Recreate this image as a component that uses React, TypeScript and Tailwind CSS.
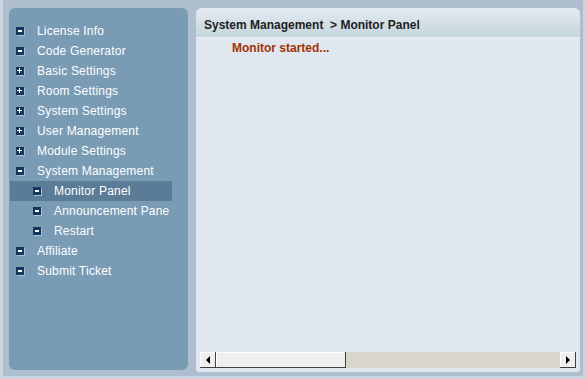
import React from "react";

type Item = { label: string; kind: "plus" | "minus"; sub?: boolean; active?: boolean };

const items: Item[] = [
  { label: "License Info", kind: "minus" },
  { label: "Code Generator", kind: "minus" },
  { label: "Basic Settings", kind: "plus" },
  { label: "Room Settings", kind: "plus" },
  { label: "System Settings", kind: "plus" },
  { label: "User Management", kind: "plus" },
  { label: "Module Settings", kind: "plus" },
  { label: "System Management", kind: "minus" },
  { label: "Monitor Panel", kind: "minus", sub: true, active: true },
  { label: "Announcement Pane", kind: "minus", sub: true },
  { label: "Restart", kind: "minus", sub: true },
  { label: "Affiliate", kind: "minus" },
  { label: "Submit Ticket", kind: "minus" },
];

function TreeIcon({ kind }: { kind: "plus" | "minus" }) {
  return (
    <span className="relative w-[8px] h-[8px] bg-[#16375d] shadow-[1px_1px_0_#a9c1d6] shrink-0">
      {kind === "minus" ? (
        <span className="absolute left-[2px] top-[3px] w-[4px] h-[2px] bg-white" />
      ) : (
        <>
          <span className="absolute left-[1px] top-[3px] w-[5px] h-[1px] bg-white" />
          <span className="absolute left-[3px] top-[1px] w-[1px] h-[5px] bg-white" />
        </>
      )}
    </span>
  );
}

export default function App() {
  return (
    <div
      className="w-[586px] h-[379px] bg-[#afbece] border-l-[3px] border-b-[3px] border-r-[3px] border-[#c9d4de] flex pt-[8px] pl-[6px] overflow-hidden"
      style={{ fontFamily: '"Liberation Sans", Arial, sans-serif' }}
    >
      <div className="w-[179px] h-[362px] bg-[#799bb4] rounded-[6px] pt-[13px] shrink-0">
        {items.map((it) => (
          <div
            key={it.label}
            className={`h-5 flex items-center text-[12px] text-white whitespace-nowrap overflow-hidden ${
              it.sub ? "pl-[24px]" : "pl-[7px]"
            } ${it.active ? "bg-[#5b7c96] w-[162px] ml-[1px] !pl-[23px]" : ""}`}
          >
            <TreeIcon kind={it.kind} />
            <span className="ml-[13px] tracking-[0.2px]">{it.label}</span>
          </div>
        ))}
      </div>

      <div className="ml-[8px] w-[384px] h-[364px] bg-[#e0e7f0] rounded-t-[6px] rounded-b-[3px] flex flex-col overflow-hidden">
        <div className="h-[30px] bg-gradient-to-b from-[#e3ebf0] to-[#c6d5de] border-b border-dotted border-[#eef3f7] flex items-start pt-[10px] px-2 text-[12px] leading-[14px] font-bold text-[#222]">
          System Management&nbsp;&nbsp;&gt; Monitor Panel
        </div>
        <div className="flex-1 pl-[36px] pt-[3px] text-[12px] leading-[14px] font-bold text-[#a33300]">Monitor started...</div>
        <div className="mx-[4px] mb-[4px] h-[16px] flex bg-[#d7d5cd]">
          <div className="w-[16px] h-[16px] bg-[#efefef] border-r border-b border-[#404040] shadow-[inset_1px_1px_0_#fff] flex items-center justify-center">
            <span className="w-0 h-0 border-y-[4px] border-y-transparent border-r-[4px] border-r-black" />
          </div>
          <div className="w-[130px] h-[16px] bg-[#efefef] border-r border-b border-[#404040] shadow-[inset_1px_1px_0_#fff]" />
          <div className="flex-1" />
          <div className="w-[16px] h-[16px] bg-[#efefef] border-r border-b border-[#404040] shadow-[inset_1px_1px_0_#fff] flex items-center justify-center">
            <span className="w-0 h-0 border-y-[4px] border-y-transparent border-l-[4px] border-l-black" />
          </div>
        </div>
      </div>
    </div>
  );
}
